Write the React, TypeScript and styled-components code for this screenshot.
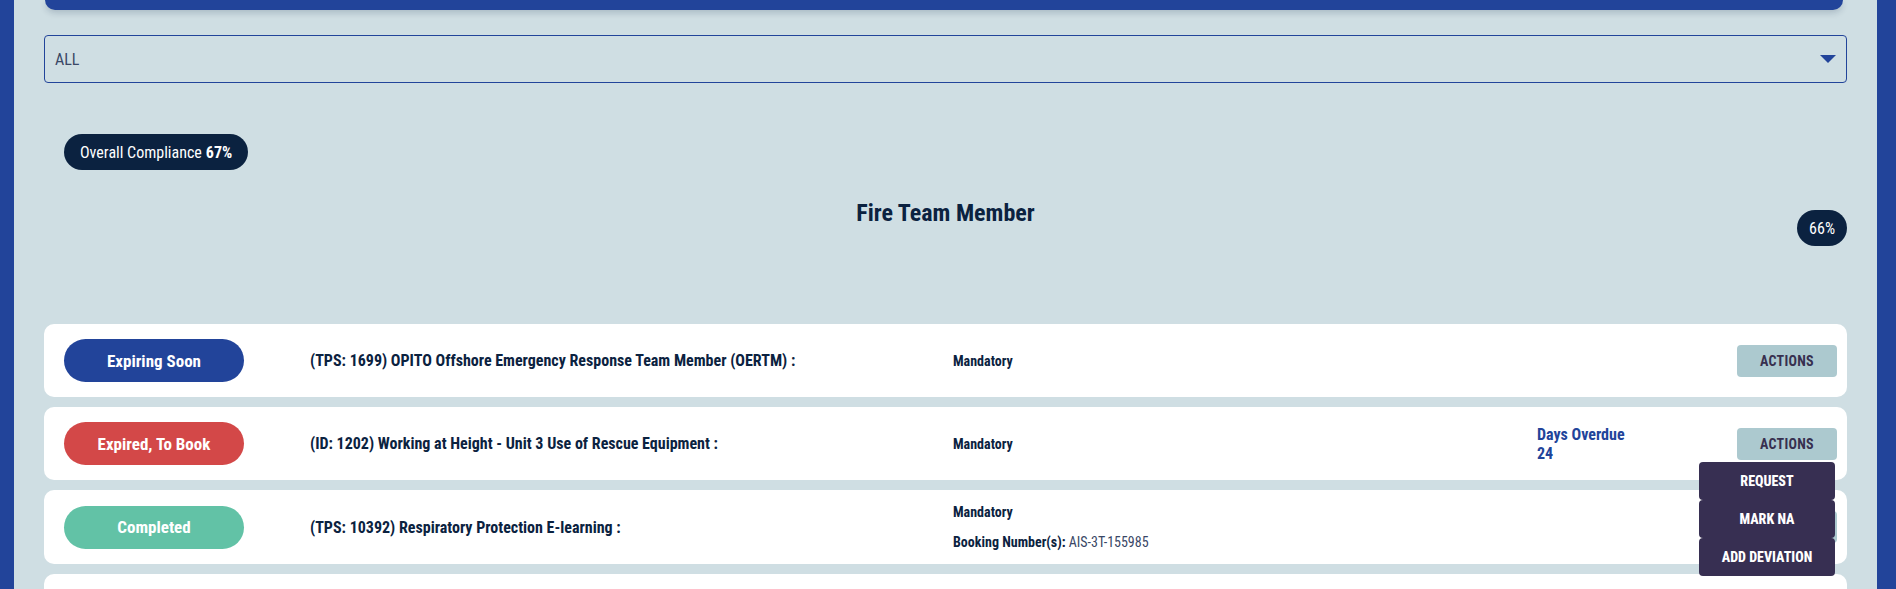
import { createGlobalStyle } from 'styled-components';
import styled from 'styled-components';

const GlobalStyle = createGlobalStyle`
  html, body {
    margin: 0;
    padding: 0;
    background: #cfdee3;
  }
  body {
    font-family: 'Roboto Condensed', 'Liberation Sans Narrow', Roboto, sans-serif;
    color: #0b2240;
  }
  * { box-sizing: border-box; }
`;

const Page = styled.div`
  display: flex;
  min-height: 100vh;
  background: #22449a;
  padding: 0 19px 0 14px;
  overflow: hidden;
`;

const Main = styled.main`
  flex: 1;
  background: #cfdee3;
  padding: 0 30px 40px;
`;

const TopBar = styled.div`
  height: 10px;
  margin: 0 4px 0 1px;
  background: #22449a;
  border-radius: 0 0 22px 22px;
  box-shadow: 0 3px 6px rgba(11, 34, 64, 0.18);
`;

const Select = styled.div`
  margin-top: 25px;
  height: 48px;
  border: 1px solid #22449a;
  border-radius: 4px;
  display: flex;
  align-items: center;
  justify-content: space-between;
  padding: 0 10px 0 10px;
  font-size: 16px;
  color: #3a4766;
`;

const Summary = styled.section`
  padding: 51px 0 0 20px;
`;

const Pill = styled.span`
  display: inline-flex;
  align-items: center;
  height: 36px;
  padding: 0 16px;
  border-radius: 18px;
  background: #0b2240;
  color: #fff;
  font-size: 16px;

  b { font-weight: 700; margin-left: 4px; }
`;

const RoleHeader = styled.div`
  display: grid;
  grid-template-columns: 1fr auto 1fr;
  margin-top: 28px;
  height: 126px;
`;

const RoleTitle = styled.h2`
  grid-column: 2;
  margin: 0;
  font-size: 24px;
  font-weight: 700;
  line-height: 30px;
  color: #0b2240;
`;

const RolePct = styled(Pill)`
  grid-column: 3;
  justify-self: end;
  align-self: start;
  margin-top: 12px;
  padding: 0 12px;
`;

const List = styled.div`
  display: flex;
  flex-direction: column;
  gap: 10px;
`;

const Card = styled.div`
  display: grid;
  grid-template-columns: 246px 643px 584px 1fr 100px;
  align-items: center;
  min-height: 73px;
  padding: 15px 10px 15px 20px;
  background: #fff;
  border-radius: 10px;
`;

const StatusBadge = styled.span<{ $color: string }>`
  display: flex;
  align-items: center;
  justify-content: center;
  width: 180px;
  height: 43px;
  border-radius: 22px;
  background: ${({ $color }) => $color};
  color: #fff;
  font-size: 17px;
  font-weight: 700;
`;

const CourseTitle = styled.div`
  font-size: 16px;
  font-weight: 700;
  color: #0b2240;
`;

const Details = styled.div`
  display: flex;
  flex-direction: column;
  gap: 16px;
  font-size: 14px;
  line-height: 14px;
  color: #0b2240;

  b { font-weight: 700; }
  span { color: #3a4766; }
`;

const Overdue = styled.div`
  font-size: 16px;
  font-weight: 700;
  line-height: 19px;
  color: #22449a;
`;

const ActionsWrap = styled.div`
  position: relative;
`;

const ActionsButton = styled.button`
  width: 100px;
  height: 32px;
  border: none;
  border-radius: 4px;
  background: #acc9cf;
  color: #37304f;
  font-family: inherit;
  font-size: 14px;
  font-weight: 700;
  letter-spacing: 0.02em;
`;

const Menu = styled.div`
  position: absolute;
  top: 34px;
  right: 2px;
  width: 136px;
  z-index: 5;
  display: flex;
  flex-direction: column;
`;

const MenuItem = styled.button`
  height: 38px;
  border: none;
  border-radius: 4px;
  background: #372f52;
  color: #fff;
  font-family: inherit;
  font-size: 14px;
  font-weight: 800;
`;

type Row = {
  status: string;
  color: string;
  title: string;
  booking?: string;
  overdue?: number;
  menuOpen?: boolean;
};

const rows: Row[] = [
  {
    status: 'Expiring Soon',
    color: '#22449a',
    title: '(TPS: 1699) OPITO Offshore Emergency Response Team Member (OERTM) :',
  },
  {
    status: 'Expired, To Book',
    color: '#d34848',
    title: '(ID: 1202) Working at Height - Unit 3 Use of Rescue Equipment :',
    overdue: 24,
    menuOpen: true,
  },
  {
    status: 'Completed',
    color: '#62c2a6',
    title: '(TPS: 10392) Respiratory Protection E-learning :',
    booking: 'AIS-3T-155985',
  },
  {
    status: 'Expired, To Book',
    color: '#d34848',
    title: '(ID: 1203) Working at Height - Unit 4 Rescue Plan :',
    overdue: 24,
  },
];

function App() {
  return (
    <>
      <GlobalStyle />
      <Page>
        <Main>
          <TopBar />
          <Select>
            ALL
            <svg width="16" height="8" viewBox="0 0 16 8">
              <polygon points="0,0 16,0 8,8" fill="#22449a" />
            </svg>
          </Select>

          <Summary>
            <Pill>
              Overall Compliance <b>67%</b>
            </Pill>
          </Summary>

          <RoleHeader>
            <RoleTitle>Fire Team Member</RoleTitle>
            <RolePct>66%</RolePct>
          </RoleHeader>

          <List>
            {rows.map((r) => (
              <Card key={r.title}>
                <StatusBadge $color={r.color}>{r.status}</StatusBadge>
                <CourseTitle>{r.title}</CourseTitle>
                <Details>
                  <b>Mandatory</b>
                  {r.booking && (
                    <div>
                      <b>Booking Number(s):</b> <span>{r.booking}</span>
                    </div>
                  )}
                </Details>
                <div>
                  {r.overdue !== undefined && (
                    <Overdue>
                      Days Overdue
                      <br />
                      {r.overdue}
                    </Overdue>
                  )}
                </div>
                <ActionsWrap>
                  <ActionsButton>ACTIONS</ActionsButton>
                  {r.menuOpen && (
                    <Menu>
                      <MenuItem>REQUEST</MenuItem>
                      <MenuItem>MARK NA</MenuItem>
                      <MenuItem>ADD DEVIATION</MenuItem>
                    </Menu>
                  )}
                </ActionsWrap>
              </Card>
            ))}
          </List>
        </Main>
      </Page>
    </>
  );
}

export default App;
